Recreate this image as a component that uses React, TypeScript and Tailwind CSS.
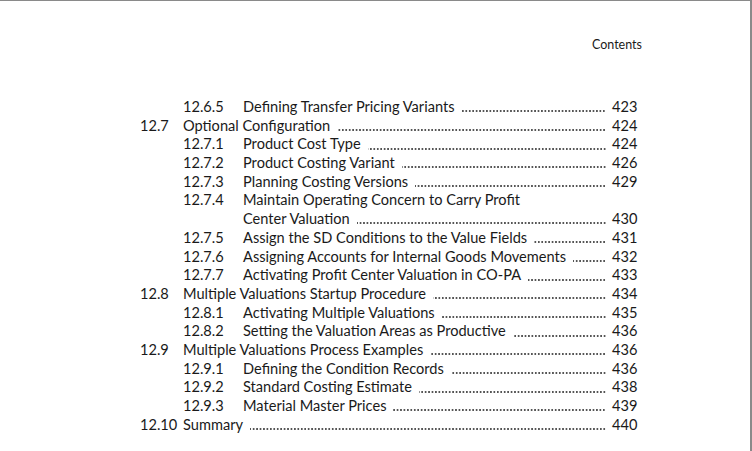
import React from "react";

type Entry = {
  num: string;
  title: string;
  page?: string;
  level: 1 | 2;
};

const ENTRIES: Entry[] = [
  { num: "12.6.5", title: "Defining Transfer Pricing Variants", page: "423", level: 2 },
  { num: "12.7", title: "Optional Configuration", page: "424", level: 1 },
  { num: "12.7.1", title: "Product Cost Type", page: "424", level: 2 },
  { num: "12.7.2", title: "Product Costing Variant", page: "426", level: 2 },
  { num: "12.7.3", title: "Planning Costing Versions", page: "429", level: 2 },
  { num: "12.7.4", title: "Maintain Operating Concern to Carry Profit", level: 2 },
  { num: "", title: "Center Valuation", page: "430", level: 2 },
  { num: "12.7.5", title: "Assign the SD Conditions to the Value Fields", page: "431", level: 2 },
  { num: "12.7.6", title: "Assigning Accounts for Internal Goods Movements", page: "432", level: 2 },
  { num: "12.7.7", title: "Activating Profit Center Valuation in CO-PA", page: "433", level: 2 },
  { num: "12.8", title: "Multiple Valuations Startup Procedure", page: "434", level: 1 },
  { num: "12.8.1", title: "Activating Multiple Valuations", page: "435", level: 2 },
  { num: "12.8.2", title: "Setting the Valuation Areas as Productive", page: "436", level: 2 },
  { num: "12.9", title: "Multiple Valuations Process Examples", page: "436", level: 1 },
  { num: "12.9.1", title: "Defining the Condition Records", page: "436", level: 2 },
  { num: "12.9.2", title: "Standard Costing Estimate", page: "438", level: 2 },
  { num: "12.9.3", title: "Material Master Prices", page: "439", level: 2 },
  { num: "12.10", title: "Summary", page: "440", level: 1 },
];

function Row({ entry }: { entry: Entry }) {
  return (
    <div className={`flex items-baseline h-[18.7px] ${entry.level === 2 ? "pl-[43px]" : ""}`}>
      <span className={`shrink-0 ${entry.level === 2 ? "w-[60px]" : "w-[43px]"}`}>{entry.num}</span>
      <span className="shrink-0 whitespace-nowrap">{entry.title}</span>
      {entry.page && (
        <>
          {/* dot leader, right-aligned to the page number */}
          <span className="flex-1 ml-[7px] mr-[6px] h-[4px] self-center translate-y-[4px] bg-[radial-gradient(circle,#555_0.7px,transparent_1px)] bg-[length:3.45px_4px] bg-repeat-x bg-right" />
          <span className="shrink-0 w-[25px] text-right">{entry.page}</span>
        </>
      )}
    </div>
  );
}

export default function App() {
  return (
    <div
      className="w-[752px] h-[451px] bg-white border-t border-r-2 border-[#8a8a8a] overflow-hidden text-[#1a1a1a]"
      style={{ fontFamily: "Lato, 'Open Sans', sans-serif" }}
    >
      <div className="pt-[36px] pr-[108px] flex justify-end text-[12.5px] leading-[16px]">Contents</div>
      <div className="mt-[45px] ml-[140px] w-[497px] text-[14.6px] leading-[18.7px]">
        {ENTRIES.map((e, i) => (
          <Row key={i} entry={e} />
        ))}
      </div>
    </div>
  );
}
